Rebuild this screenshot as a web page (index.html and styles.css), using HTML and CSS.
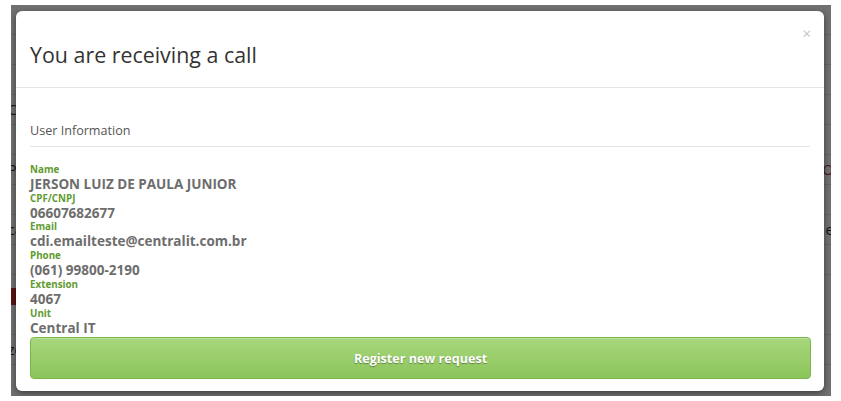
FILE: index.html
```html
<!DOCTYPE html>
<html lang="en">
<head>
<meta charset="utf-8">
<title>Incoming call</title>
<link rel="stylesheet" href="styles.css">
</head>
<body>
<div class="screen">
  <div class="page">
    <div class="row"></div>
    <div class="row"></div>
    <div class="row"></div>
    <div class="row"><span class="lt">Co</span></div>
    <div class="row"></div>
    <div class="row"><span class="lt">Pr</span><span class="rt red">Or</span></div>
    <div class="row"></div>
    <div class="row"><span class="lt">ca</span><span class="rt">er</span></div>
    <div class="row"></div>
    <div class="row danger"><span class="danger-cell"></span></div>
    <div class="row"></div>
    <div class="row"><span class="lt">ze</span></div>
  </div>
  <div class="backdrop"></div>
  <div class="modal">
    <div class="modal-header">
      <h3 class="modal-title">You are receiving a call</h3>
      <span class="close">×</span>
    </div>
    <div class="modal-body">
      <div class="section-title">User Information</div>
      <div class="fields">
        <div class="label">Name</div>
        <div class="value">JERSON LUIZ DE PAULA JUNIOR</div>
        <div class="label">CPF/CNPJ</div>
        <div class="value">06607682677</div>
        <div class="label">Email</div>
        <div class="value">cdi.emailteste@centralit.com.br</div>
        <div class="label">Phone</div>
        <div class="value">(061) 99800-2190</div>
        <div class="label">Extension</div>
        <div class="value">4067</div>
        <div class="label">Unit</div>
        <div class="value">Central IT</div>
      </div>
      <button class="btn-success" type="button">Register new request</button>
    </div>
  </div>
</div>
</body>
</html>
```

FILE: styles.css
```css
html, body {
  margin: 0;
  padding: 0;
  background: #fff;
}
body {
  font-family: "Open Sans", "Noto Sans", sans-serif;
  width: 841px;
  height: 401px;
  overflow: hidden;
}
.screen {
  position: relative;
  margin: 5px 10px 0 11px;
  width: 820px;
  height: 391px;
  overflow: hidden;
  background: #fff;
}
.page {
  display: flex;
  flex-direction: column;
}
.row {
  height: 29px;
  border-bottom: 1px solid #e4e4e4;
  display: flex;
  align-items: center;
  justify-content: space-between;
  font-size: 14px;
  color: #333;
}
.row .lt { margin-left: -3px; }
.row .rt { margin-right: -8px; }
.row .red { color: #b03040; }
.row.danger {
  height: 17px;
  margin-top: 13px;
  border-bottom: 0;
  justify-content: flex-start;
}
.danger-cell {
  width: 120px;
  height: 17px;
  background: #c9302c;
}
.backdrop {
  position: absolute;
  inset: 0;
  background: rgba(0, 0, 0, 0.56);
}
.modal {
  position: absolute;
  left: 5px;
  top: 6px;
  width: 808px;
  background: #fff;
  border-radius: 6px;
  box-shadow: 0 2px 6px rgba(0, 0, 0, 0.45);
}
.modal-header {
  position: relative;
  padding: 28px 14px 18px;
  border-bottom: 1px solid #e5e5e5;
}
.modal-title {
  margin: 0;
  font-size: 21.4px;
  line-height: 30px;
  font-weight: 400;
  color: #333;
  padding-top: 1px;
  margin-bottom: -1px;
}
.close {
  position: absolute;
  right: 13px;
  top: 12px;
  font-size: 15px;
  line-height: 20px;
  color: #c4c4c4;
}
.modal-body {
  padding: 34px 13px 12px 14px;
}
.section-title {
  font-size: 12.6px;
  line-height: 18px;
  color: #555;
  padding-bottom: 6px;
  border-bottom: 1px solid #e5e5e5;
  margin-right: 1px;
}
.fields {
  padding-top: 17px;
  display: flex;
  flex-direction: column;
}
.label {
  font-size: 9.8px;
  line-height: 12px;
  font-weight: 700;
  color: #5f9b2f;
}
.value {
  font-size: 13.5px;
  line-height: 16.7px;
  font-weight: 700;
  color: #6d6d6d;
}
.btn-success {
  display: block;
  width: 100%;
  height: 42px;
  margin-top: 1px;
  border: 1px solid #7bb64b;
  border-radius: 4px;
  background: linear-gradient(to bottom, #a7d67c 0%, #8cc55a 100%);
  box-shadow: inset 0 1px 0 rgba(255, 255, 255, 0.25);
  font-family: "Open Sans", "Noto Sans", sans-serif;
  font-size: 12.6px;
  font-weight: 700;
  color: #fff;
  text-shadow: 0 1px 1px rgba(0, 0, 0, 0.35);
  cursor: pointer;
}
```
